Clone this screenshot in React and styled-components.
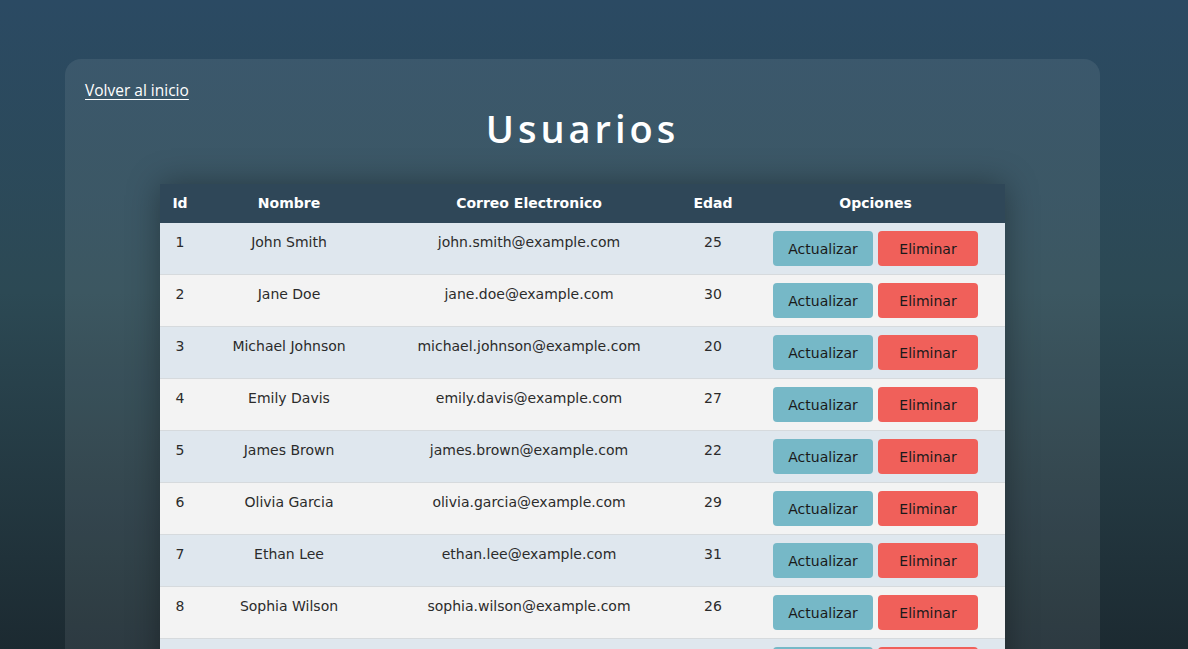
import React from 'react';
import styled, { createGlobalStyle } from 'styled-components';

const GlobalStyle = createGlobalStyle`
  html, body {
    margin: 0;
    padding: 0;
  }
  body {
    min-height: 100vh;
    background: linear-gradient(180deg, #2b4a63 0%, #2c4954 45%, #1c2a31 100%) fixed;
    font-family: "DejaVu Sans", sans-serif;
  }
`;

const Page = styled.div`
  padding: 59px 88px 40px 65px;
`;

const Card = styled.section`
  background: rgba(255, 255, 255, 0.08);
  border-radius: 16px;
  padding: 20px 20px 40px;
`;

const BackLink = styled.a`
  display: inline-block;
  color: #ffffff;
  font-family: "Open Sans", sans-serif;
  font-size: 15.5px;
  line-height: 22px;
  text-decoration: underline;
  text-underline-offset: 3px;
  cursor: pointer;
`;

const Title = styled.h1`
  margin: 0 0 29px;
  text-align: center;
  color: #ffffff;
  font-family: "Open Sans", sans-serif;
  font-weight: 600;
  font-size: 38px;
  line-height: 54px;
  letter-spacing: 4px;
`;

const Table = styled.table`
  width: 845px;
  margin: 0 auto;
  border-collapse: collapse;
  table-layout: fixed;
  box-shadow: 0 0 30px rgba(0, 0, 0, 0.35);
`;

const HeadCell = styled.th`
  width: ${p => p.$w}px;
  background: #2f4758;
  color: #ffffff;
  font-size: 14px;
  font-weight: bold;
  line-height: 16px;
  padding: 11px 0 12px;
  text-align: center;
`;

const Row = styled.tr`
  background: ${p => (p.$odd ? '#dfe7ee' : '#f3f3f3')};
  border-bottom: 1px solid #d6dadd;
`;

const Cell = styled.td`
  color: #2b2b2b;
  font-size: 14px;
  line-height: 16px;
  padding: 11px 0 0;
  vertical-align: top;
  text-align: center;
`;

const OptionsCell = styled.td`
  padding: 8px 0;
  text-align: center;
  vertical-align: top;
`;

const Actions = styled.div`
  display: flex;
  justify-content: center;
  gap: 5px;
`;

const Button = styled.button`
  width: 100px;
  height: 35px;
  border: none;
  border-radius: 4px;
  background: ${p => (p.$danger ? '#f0605a' : '#76b8c7')};
  color: #1a1a1a;
  font-family: "DejaVu Sans", sans-serif;
  font-size: 14px;
  cursor: pointer;
`;

const columns = [
  { label: 'Id', w: 40 },
  { label: 'Nombre', w: 178 },
  { label: 'Correo Electronico', w: 302 },
  { label: 'Edad', w: 66 },
  { label: 'Opciones', w: 259 },
];

const users = [
  { id: 1, name: 'John Smith', email: 'john.smith@example.com', age: 25 },
  { id: 2, name: 'Jane Doe', email: 'jane.doe@example.com', age: 30 },
  { id: 3, name: 'Michael Johnson', email: 'michael.johnson@example.com', age: 20 },
  { id: 4, name: 'Emily Davis', email: 'emily.davis@example.com', age: 27 },
  { id: 5, name: 'James Brown', email: 'james.brown@example.com', age: 22 },
  { id: 6, name: 'Olivia Garcia', email: 'olivia.garcia@example.com', age: 29 },
  { id: 7, name: 'Ethan Lee', email: 'ethan.lee@example.com', age: 31 },
  { id: 8, name: 'Sophia Wilson', email: 'sophia.wilson@example.com', age: 26 },
  { id: 9, name: 'Daniel Martinez', email: 'daniel.martinez@example.com', age: 24 },
  { id: 10, name: 'Ava Anderson', email: 'ava.anderson@example.com', age: 28 },
];

export default function App() {
  return (
    <>
      <GlobalStyle />
      <Page>
        <Card>
          <BackLink href="#">Volver al inicio</BackLink>
          <Title>Usuarios</Title>
          <Table>
            <thead>
              <tr>
                {columns.map(c => (
                  <HeadCell key={c.label} $w={c.w}>
                    {c.label}
                  </HeadCell>
                ))}
              </tr>
            </thead>
            <tbody>
              {users.map((u, i) => (
                <Row key={u.id} $odd={i % 2 === 0}>
                  <Cell>{u.id}</Cell>
                  <Cell>{u.name}</Cell>
                  <Cell>{u.email}</Cell>
                  <Cell>{u.age}</Cell>
                  <OptionsCell>
                    <Actions>
                      <Button>Actualizar</Button>
                      <Button $danger>Eliminar</Button>
                    </Actions>
                  </OptionsCell>
                </Row>
              ))}
            </tbody>
          </Table>
        </Card>
      </Page>
    </>
  );
}
